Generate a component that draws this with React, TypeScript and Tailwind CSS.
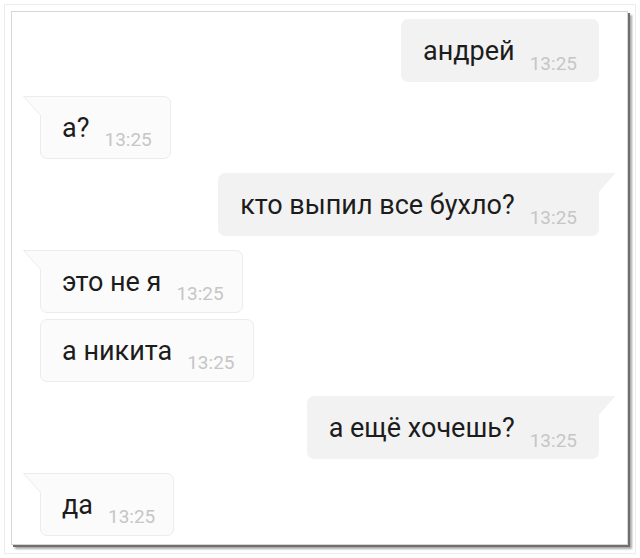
import React from 'react';

type Message = {
  text: string;
  time: string;
  outgoing: boolean;
  tail: boolean;
};

const messages: Message[] = [
  { text: 'андрей', time: '13:25', outgoing: true, tail: false },
  { text: 'а?', time: '13:25', outgoing: false, tail: true },
  { text: 'кто выпил все бухло?', time: '13:25', outgoing: true, tail: true },
  { text: 'это не я', time: '13:25', outgoing: false, tail: true },
  { text: 'а никита', time: '13:25', outgoing: false, tail: false },
  { text: 'а ещё хочешь?', time: '13:25', outgoing: true, tail: true },
  { text: 'да', time: '13:25', outgoing: false, tail: true },
];

// small triangle that sticks out of the top corner of a bubble
function Tail({ outgoing }: { outgoing: boolean }) {
  if (outgoing) {
    return (
      <svg width="18" height="20" viewBox="0 0 18 20" className="absolute top-0 right-[-17px]">
        <polygon points="0,0 17.5,0 0,20" fill="#f2f2f2" />
      </svg>
    );
  }
  return (
    <svg width="18" height="20" viewBox="0 0 18 20" className="absolute top-[-1px] left-[-18px]">
      <polygon points="18,0.5 0.5,0.5 18,20" fill="#fbfbfb" />
      <polyline points="18,0.5 0.5,0.5 18,20" fill="none" stroke="#ececec" strokeWidth="1" />
    </svg>
  );
}

function Bubble({ m }: { m: Message }) {
  const base = 'relative flex items-center h-[63px] gap-[15px]';
  const look = m.outgoing
    ? `px-[22px] bg-[#f2f2f2] rounded-[7px] ${m.tail ? 'rounded-tr-none' : ''}`
    : `pl-[21px] pr-[18px] bg-[#fbfbfb] border border-[#ececec] rounded-[7px] ${m.tail ? 'rounded-tl-none' : ''}`;
  return (
    <div className={`${base} ${look}`}>
      {m.tail && <Tail outgoing={m.outgoing} />}
      <span className="text-[27px] leading-[28px] text-[#1c1c1c] whitespace-nowrap">{m.text}</span>
      <span className="self-end mb-[9px] text-[19px] leading-[19px] text-[#c6c6c6] whitespace-nowrap">{m.time}</span>
    </div>
  );
}

export default function App() {
  return (
    <div className="w-[640px] h-[558px] bg-white p-[4px] font-['Roboto',sans-serif]">
      <div className="h-full border border-[#ececec] pt-[6px] pl-[6px] pr-[7px] pb-[8px]">
        <div className="h-full bg-white border border-[#d6d6d6] shadow-[2px_2px_0_#6f6f6f,4px_4px_2px_#a8a8a8] pt-[7px] flex flex-col">
          {messages.map((m, i) => {
            const prev = messages[i - 1];
            const sameGroup = prev && prev.outgoing === m.outgoing;
            return (
              <div
                key={i}
                className={`flex ${m.outgoing ? 'justify-end pr-[28px]' : 'justify-start pl-[28px]'} ${
                  i === 0 ? '' : sameGroup ? 'mt-[6px]' : 'mt-[14px]'
                }`}
              >
                <Bubble m={m} />
              </div>
            );
          })}
        </div>
      </div>
    </div>
  );
}
